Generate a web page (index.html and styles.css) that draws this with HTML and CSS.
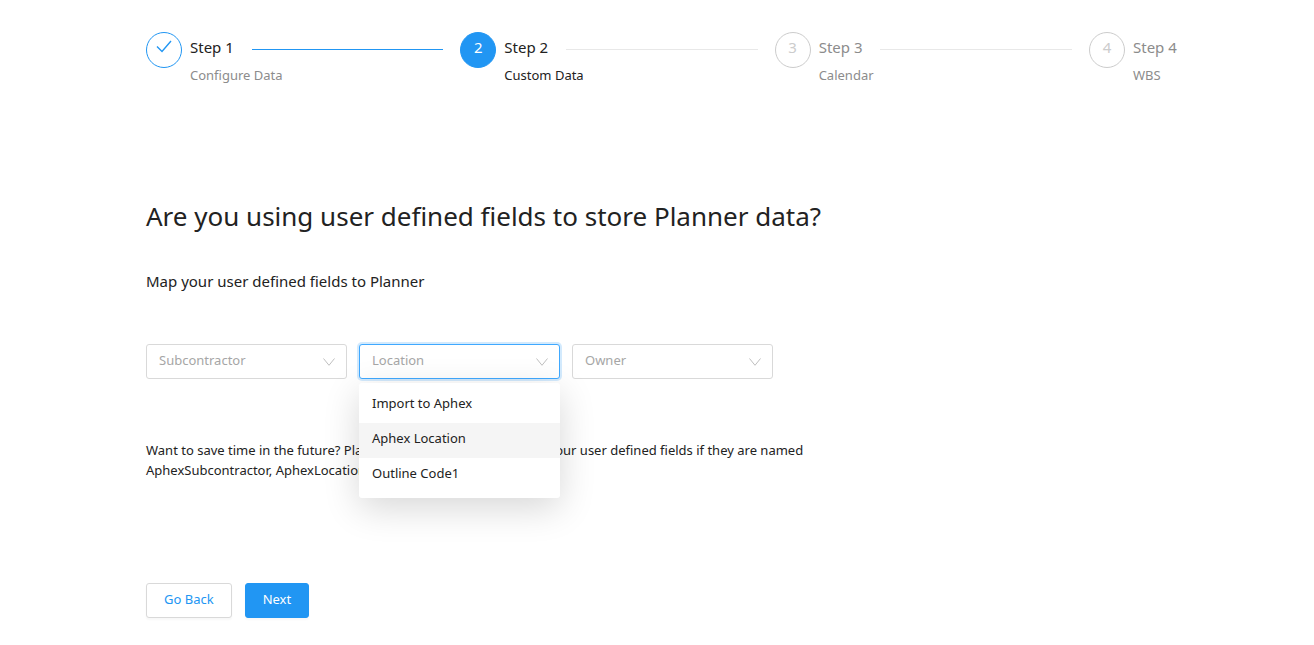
FILE: index.html
```html
<!DOCTYPE html>
<html lang="en">
<head>
    <meta charset="UTF-8">
    <meta name="viewport" content="width=device-width, initial-scale=1.0">
    <title>Custom Data</title>
    <link rel="stylesheet" href="styles.css">
</head>
<body>

<main class="page">
    <ol class="steps">
        <li class="step done">
            <span class="step-icon">
                <svg width="16" height="16" viewBox="0 0 16 16" aria-label="Done"><path d="M1 7.5L6 12.5L15 2"/></svg>
            </span>
            <div class="step-content">
                <div class="step-title">Step 1</div>
                <div class="step-description">Configure Data</div>
            </div>
        </li>
        <li class="step active" aria-current="step">
            <span class="step-icon">2</span>
            <div class="step-content">
                <div class="step-title">Step 2</div>
                <div class="step-description">Custom Data</div>
            </div>
        </li>
        <li class="step">
            <span class="step-icon">3</span>
            <div class="step-content">
                <div class="step-title">Step 3</div>
                <div class="step-description">Calendar</div>
            </div>
        </li>
        <li class="step">
            <span class="step-icon">4</span>
            <div class="step-content">
                <div class="step-title">Step 4</div>
                <div class="step-description">WBS</div>
            </div>
        </li>
    </ol>

    <h1>Are you using user defined fields to store Planner data?</h1>
    <h2>Map your user defined fields to Planner</h2>

    <form>
        <div class="fields">
            <div class="field">
                <select id="subcontractor" aria-label="Subcontractor">
                    <option>Subcontractor</option>
                </select>
                <svg class="arrow" width="12" height="8" viewBox="0 0 12 8"><path d="M0.5 0.5L6 7.3L11.5 0.5"/></svg>
            </div>
            <div class="field open">
                <select id="location" aria-label="Location">
                    <option>Location</option>
                </select>
                <svg class="arrow" width="12" height="8" viewBox="0 0 12 8"><path d="M0.5 0.5L6 7.3L11.5 0.5"/></svg>
                <ul class="dropdown" role="listbox" aria-label="Location">
                    <li role="option">Import to Aphex</li>
                    <li role="option" class="hovered">Aphex Location</li>
                    <li role="option">Outline Code1</li>
                </ul>
            </div>
            <div class="field">
                <select id="owner" aria-label="Owner">
                    <option>Owner</option>
                </select>
                <svg class="arrow" width="12" height="8" viewBox="0 0 12 8"><path d="M0.5 0.5L6 7.3L11.5 0.5"/></svg>
            </div>
        </div>

        <p class="hint">Want to save time in the future? Planner will automatically import your user defined fields if they are named AphexSubcontractor, AphexLocation, AphexOwner</p>

        <div class="actions">
            <button type="button" class="btn">Go Back</button>
            <button type="button" class="btn primary">Next</button>
        </div>
    </form>
</main>

</body>
</html>
```
FILE: styles.css
```css
* {
    box-sizing: border-box;
}

body {
    margin: 0;
    font-family: "Noto Sans", "Open Sans", sans-serif;
    font-size: 13px;
    line-height: 20px;
    color: #222;
    background-color: #fff;
}

.page {
    padding: 32px 127px 24px 146px;
}

/* Steps */
.steps {
    display: flex;
    margin: 0;
    padding: 0;
    list-style: none;
}

.step {
    display: flex;
    flex: 1;
    gap: 8px;
    color: #8c8c8c;
}

.step:last-child {
    flex: 0 0 98px;
}

.step-icon {
    display: flex;
    flex: none;
    justify-content: center;
    width: 36px;
    height: 36px;
    border: 1px solid #ccc;
    border-radius: 50%;
    font-size: 15px;
    line-height: 29px;
    color: #ccc;
}

.step-icon svg {
    margin-top: 6px;
    fill: none;
    stroke: #2196f3;
    stroke-width: 1.4;
}

.step-content {
    flex: 1;
}

.step-title {
    display: flex;
    align-items: center;
    gap: 18px;
    margin-right: 17px;
    font-size: 15px;
    line-height: 30px;
    white-space: nowrap;
}

.step-title::after {
    content: "";
    flex: 1;
    height: 1px;
    margin-top: 5px;
    background-color: #e8e8e8;
}

.step:last-child .step-title {
    margin-right: 0;
}

.step:last-child .step-title::after {
    display: none;
}

.step-description {
    margin-top: 3px;
}

.step.done .step-icon {
    border-color: #2196f3;
}

.step.done .step-title {
    color: #222;
}

.step.done .step-title::after {
    background-color: #2196f3;
}

.step.active {
    color: #222;
}

.step.active .step-icon {
    border-color: #2196f3;
    background-color: #2196f3;
    color: #fff;
}

h1 {
    margin: 111px 0 0;
    font-size: 26px;
    font-weight: 400;
    line-height: 40px;
}

h2 {
    margin: 33px 0 51px;
    font-size: 15px;
    font-weight: 400;
    line-height: 24px;
}

/* Selects */
.fields {
    display: flex;
    gap: 12px;
}

.field {
    position: relative;
    width: 201px;
}

.field select {
    display: block;
    width: 100%;
    height: 35px;
    padding: 0 12px 4px;
    border: 1px solid #d9d9d9;
    border-radius: 3px;
    outline: none;
    appearance: none;
    background-color: #fff;
    font: inherit;
    color: #a6a6a6;
}

.field.open select {
    border-color: #40a9ff;
    box-shadow: 0 0 0 2px rgba(33, 150, 243, 0.2);
}

.arrow {
    position: absolute;
    top: 14px;
    right: 12px;
    fill: none;
    stroke: #bfbfbf;
    pointer-events: none;
}

.dropdown {
    position: absolute;
    top: 39px;
    left: 0;
    right: 0;
    z-index: 1;
    margin: 0;
    padding: 5px 0;
    border-radius: 3px;
    background-color: #fff;
    box-shadow: 0 10px 36px rgba(0, 0, 0, 0.16);
    list-style: none;
}

.dropdown li {
    padding: 5px 13px 10px;
}

.dropdown li.hovered {
    background-color: #f5f5f5;
}

.hint {
    max-width: 670px;
    margin: 61px 0 103px;
}

/* Buttons */
.actions {
    display: flex;
    gap: 13px;
}

.btn {
    height: 35px;
    padding: 0 17px 4px;
    border: 1px solid #d9d9d9;
    border-radius: 3px;
    background-color: #fff;
    box-shadow: 0 2px 2px rgba(0, 0, 0, 0.03);
    font: inherit;
    color: #2196f3;
    cursor: pointer;
}

.btn.primary {
    border-color: #2196f3;
    background-color: #2196f3;
    color: #fff;
}
```
